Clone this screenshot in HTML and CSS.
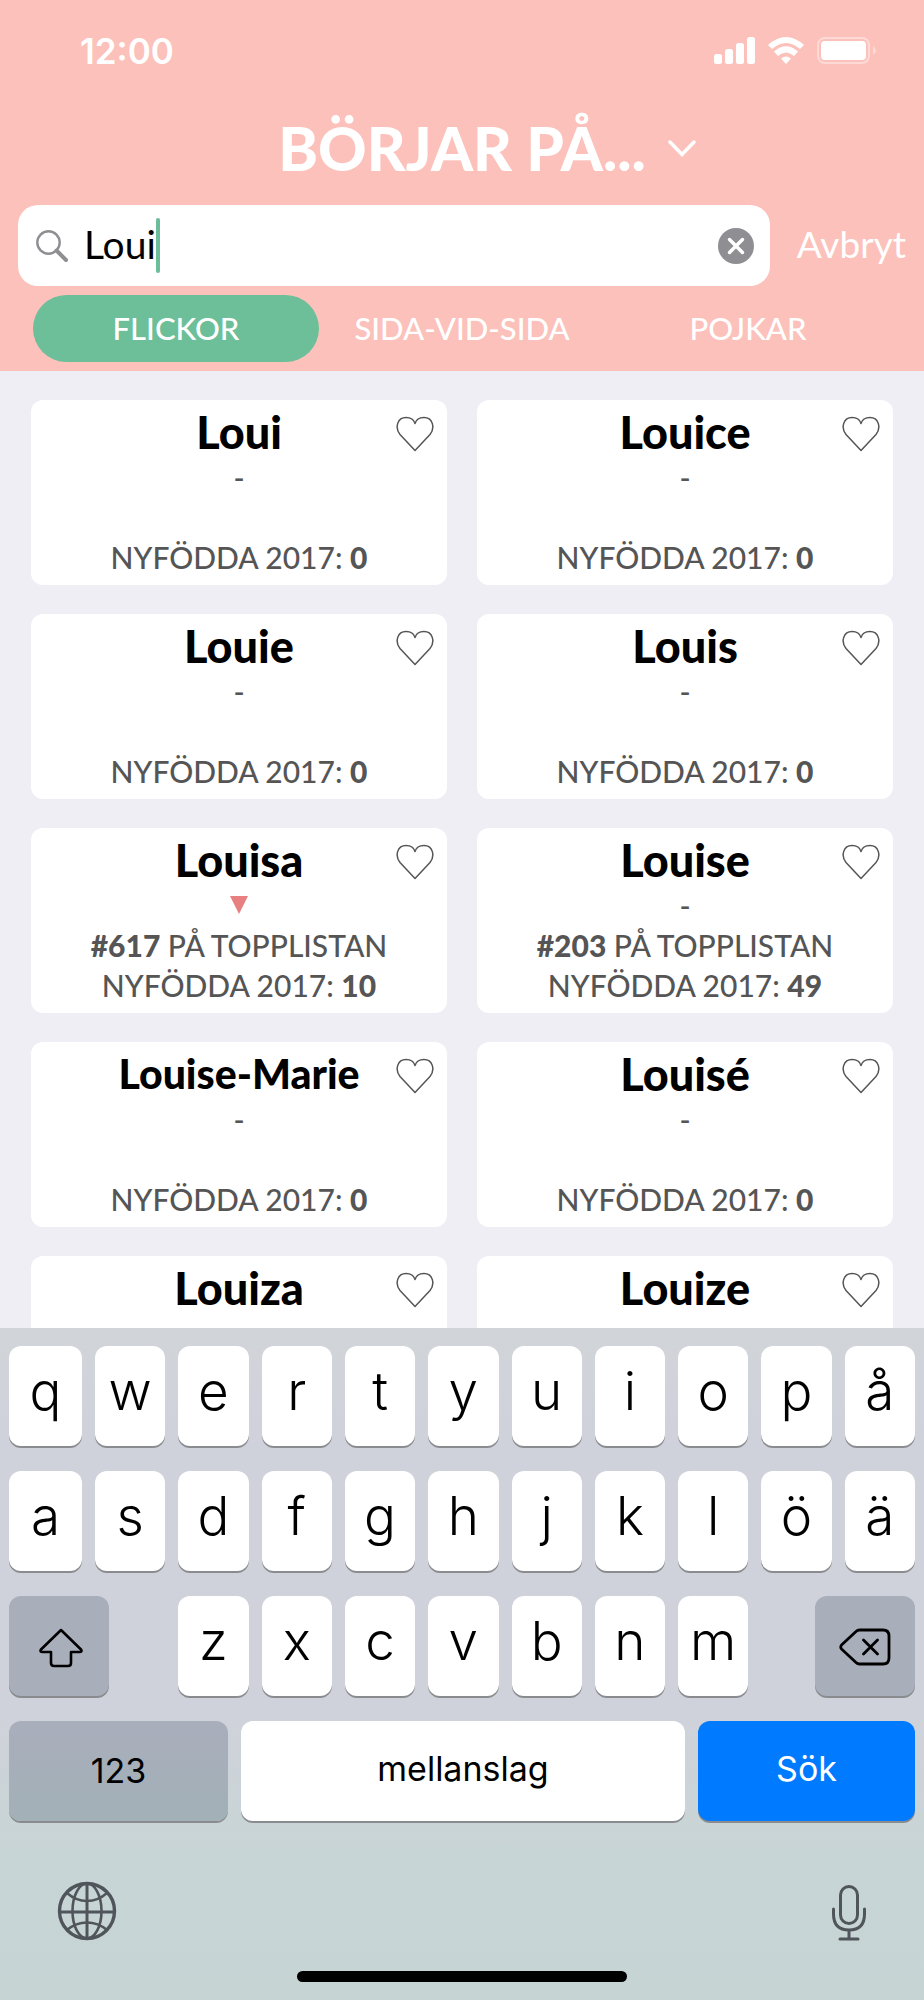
FILE: index.html
```html
<!DOCTYPE html>
<html lang="sv">
<head>
<meta charset="utf-8">
<meta name="viewport" content="width=device-width, initial-scale=1">
<title>Börjar på…</title>
<link rel="stylesheet" href="styles.css">
</head>
<body>
<svg class="defs" aria-hidden="true">
  <symbol id="heart" viewBox="0 0 38 36">
    <path d="M19 34.500 L4 18.500 C-1.500 11.500 1.500 1.500 10 1.500 C14.500 1.500 18 4 19 7.500 C20 4 23.500 1.500 28 1.500 C36.500 1.500 39.500 11.500 34 18.500 Z" fill="none" stroke="#555" stroke-width="1.500" stroke-linejoin="round"/>
  </symbol>
</svg>
<header class="header">
  <div class="status">
    <time class="clock">12:00</time>
    <svg class="status-icons" viewBox="0 0 166 30" aria-hidden="true">
      <g fill="#fff">
        <rect x="1" y="18" width="8" height="10" rx="2.500"/>
        <rect x="12" y="13" width="8" height="15" rx="2.500"/>
        <rect x="23" y="7" width="8" height="21" rx="2.500"/>
        <rect x="34" y="1" width="8" height="27" rx="2.500"/>
        <path d="M55 9 Q73 -7 91 9 L87 13 Q73 1 59 13 Z"/>
        <path d="M61 15.500 Q73 5 85 15.500 L81 20 Q73 13 65 20 Z"/>
        <path d="M68 22.500 Q73 18.500 78 22.500 L73 28 Z"/>
        <rect x="108" y="5" width="45" height="19" rx="4"/>
        <path d="M160 10 Q166 14.500 160 19 Z" opacity=".4"/>
      </g>
      <rect x="105" y="2" width="51" height="25" rx="7" fill="none" stroke="#fff" stroke-width="2" opacity=".4"/>
    </svg>
  </div>
  <button class="title" type="button">
    <span>BÖRJAR PÅ...</span>
    <svg class="chevron" viewBox="0 0 28 17" aria-hidden="true"><path d="M2 2 L14 14.500 L26 2" fill="none" stroke="#fff" stroke-width="3.500" stroke-linecap="round"/></svg>
  </button>
  <form class="search">
    <div class="search-box">
      <svg class="glass" viewBox="0 0 32 32" aria-hidden="true"><g fill="none" stroke="#8e8e93"><circle cx="12.500" cy="12.500" r="11.200" stroke-width="2.400"/><path d="M20.500 20.500 L30 30" stroke-width="4" stroke-linecap="round"/></g></svg>
      <input class="search-input" type="text" value="Loui" aria-label="Sök namn">
      <span class="caret"></span>
      <button class="clear" type="button" aria-label="Rensa"><svg viewBox="0 0 36 36" aria-hidden="true"><circle cx="18" cy="18" r="18" fill="#8e8e93"/><path d="M11.500 11.500 L24.500 24.500 M24.500 11.500 L11.500 24.500" stroke="#fff" stroke-width="3.500" stroke-linecap="round"/></svg></button>
    </div>
    <button class="cancel" type="button">Avbryt</button>
  </form>
  <nav class="tabs">
    <button class="tab active" type="button">FLICKOR</button>
    <button class="tab" type="button">SIDA-VID-SIDA</button>
    <button class="tab" type="button">POJKAR</button>
  </nav>
</header>
<main class="cards">
  <article class="card"><h2>Loui</h2><p class="trend">-</p><p class="rank"></p><p>NYFÖDDA 2017: <b>0</b></p><button class="fav" type="button" aria-label="Spara Loui"><svg><use href="#heart"/></svg></button></article>
  <article class="card"><h2>Louice</h2><p class="trend">-</p><p class="rank"></p><p>NYFÖDDA 2017: <b>0</b></p><button class="fav" type="button" aria-label="Spara Louice"><svg><use href="#heart"/></svg></button></article>
  <article class="card"><h2>Louie</h2><p class="trend">-</p><p class="rank"></p><p>NYFÖDDA 2017: <b>0</b></p><button class="fav" type="button" aria-label="Spara Louie"><svg><use href="#heart"/></svg></button></article>
  <article class="card"><h2>Louis</h2><p class="trend">-</p><p class="rank"></p><p>NYFÖDDA 2017: <b>0</b></p><button class="fav" type="button" aria-label="Spara Louis"><svg><use href="#heart"/></svg></button></article>
  <article class="card"><h2>Louisa</h2><p class="trend"><svg class="down" viewBox="0 0 18 18" aria-hidden="true"><path d="M0 0 H18 L9 18 Z" fill="#e87f80"/></svg></p><p class="rank"><b>#617</b> PÅ TOPPLISTAN</p><p>NYFÖDDA 2017: <b>10</b></p><button class="fav" type="button" aria-label="Spara Louisa"><svg><use href="#heart"/></svg></button></article>
  <article class="card"><h2>Louise</h2><p class="trend">-</p><p class="rank"><b>#203</b> PÅ TOPPLISTAN</p><p>NYFÖDDA 2017: <b>49</b></p><button class="fav" type="button" aria-label="Spara Louise"><svg><use href="#heart"/></svg></button></article>
  <article class="card"><h2 class="long">Louise-Marie</h2><p class="trend">-</p><p class="rank"></p><p>NYFÖDDA 2017: <b>0</b></p><button class="fav" type="button" aria-label="Spara Louise-Marie"><svg><use href="#heart"/></svg></button></article>
  <article class="card"><h2>Louisé</h2><p class="trend">-</p><p class="rank"></p><p>NYFÖDDA 2017: <b>0</b></p><button class="fav" type="button" aria-label="Spara Louisé"><svg><use href="#heart"/></svg></button></article>
  <article class="card"><h2>Louiza</h2><button class="fav" type="button" aria-label="Spara Louiza"><svg><use href="#heart"/></svg></button></article>
  <article class="card"><h2>Louize</h2><button class="fav" type="button" aria-label="Spara Louize"><svg><use href="#heart"/></svg></button></article>
</main>
<section class="keyboard" aria-label="Tangentbord">
  <div class="keys">
    <button class="key">q</button><button class="key">w</button><button class="key">e</button><button class="key">r</button><button class="key">t</button><button class="key">y</button><button class="key">u</button><button class="key">i</button><button class="key">o</button><button class="key">p</button><button class="key">å</button>
    <button class="key">a</button><button class="key">s</button><button class="key">d</button><button class="key">f</button><button class="key">g</button><button class="key">h</button><button class="key">j</button><button class="key">k</button><button class="key">l</button><button class="key">ö</button><button class="key">ä</button>
    <button class="key mod shift" aria-label="Skift"><svg class="shift-icon" viewBox="0 0 44 40" aria-hidden="true"><path d="M22 2 L42 21.500 Q43.500 24 40.500 24 H32 V35 Q32 38 29 38 H15 Q12 38 12 35 V24 H3.500 Q0.500 24 2 21.500 Z" fill="none" stroke="#000" stroke-width="2.600" stroke-linejoin="round"/></svg></button>
    <button class="key">z</button><button class="key">x</button><button class="key">c</button><button class="key">v</button><button class="key">b</button><button class="key">n</button><button class="key">m</button>
    <button class="key mod delete" aria-label="Radera"><svg class="delete-icon" viewBox="0 0 52 38" aria-hidden="true"><path d="M20.500 2 H44 Q50 2 50 8 V30 Q50 36 44 36 H20.500 Q18.500 36 17 34.500 L2.500 21 Q1 19 2.500 17 L17 3.500 Q18.500 2 20.500 2 Z M24.500 12 L38.500 26 M38.500 12 L24.500 26" fill="none" stroke="#000" stroke-width="2.800" stroke-linecap="round" stroke-linejoin="round"/></svg></button>
  </div>
  <div class="bottom-keys">
    <button class="key word mod">123</button>
    <button class="key word space">mellanslag</button>
    <button class="key word go">Sök</button>
  </div>
  <div class="tools">
    <button class="tool" aria-label="Byt språk"><svg class="globe" viewBox="0 0 60 60" aria-hidden="true"><g fill="none" stroke="#50555c" stroke-width="2.600"><circle cx="30" cy="30" r="27.500" stroke-width="3.400"/><ellipse cx="30" cy="30" rx="14.500" ry="27.500"/><path d="M30 2 V58 M2 31 H58" stroke-width="3"/><path d="M10 12 Q19 20 30 20 T50 12 M10 49 Q19 41.500 30 41.500 T50 49" stroke="none"/><path d="M10 12 Q19 20 30 20 Q41 20 50 12 M10 49 Q19 41.500 30 41.500 Q41 41.500 50 49" stroke-width="2.400"/></g></svg></button>
    <button class="tool" aria-label="Diktering"><svg class="mic" viewBox="0 0 34 56" aria-hidden="true"><g fill="none" stroke="#50555c" stroke-width="3"><rect x="8.500" y="1.500" width="17" height="37" rx="8.500"/><path d="M1.500 24 V29 Q1.500 45 17 45 Q32.500 45 32.500 29 V24 M17 45 V54 M8 54 H26" stroke-linecap="round"/></g></svg></button>
  </div>
  <div class="home"></div>
</section>
</body>
</html>
```

FILE: styles.css
```css
* { box-sizing: border-box; }

body {
  margin: 0;
  height: 100vh;
  display: flex;
  flex-direction: column;
  overflow: hidden;
  background: #efeef4;
  color: #000;
  font-family: Lato, "Open Sans", sans-serif;
}

button {
  margin: 0;
  padding: 0;
  border: 0;
  background: none;
  color: inherit;
  font: inherit;
}

svg { display: block; }
.defs { position: absolute; width: 0; height: 0; }

.header {
  flex: none;
  background: #fcc1ba;
  color: #fff;
  padding-bottom: 9px;
}

.status {
  display: flex;
  align-items: center;
  justify-content: space-between;
  height: 102px;
  padding: 0 45px 0 80px;
}

.clock {
  font: 600 35px/40px Inter, sans-serif;
}

.status-icons { width: 166px; height: 30px; }

.title {
  display: flex;
  align-items: center;
  justify-content: center;
  gap: 22px;
  width: 100%;
  height: 92px;
  padding-left: 50px;
  font-size: 60px;
  font-weight: 900;
  line-height: 88px;
}

.chevron { width: 28px; height: 17px; }

.search {
  display: flex;
  align-items: center;
  gap: 27px;
  margin-top: 11px;
  padding: 0 18px;
}

.search-box {
  flex: 1;
  display: flex;
  align-items: center;
  height: 81px;
  padding: 0 16px 0 18px;
  border-radius: 20px;
  background: #fff;
}

.glass { width: 32px; height: 32px; margin-right: 16px; }

.search-input {
  field-sizing: content;
  padding: 0 0 4px;
  border: 0;
  outline: 0;
  background: none;
  color: #000;
  font: 400 39px/48px Lato, sans-serif;
}

.caret {
  width: 4px;
  height: 55px;
  border-radius: 2px;
  background: #6cbd99;
}

.clear { margin-left: auto; }
.clear svg { width: 36px; height: 36px; }

.cancel {
  padding-bottom: 4px;
  font: 400 37px/48px Lato, sans-serif;
}

.tabs {
  display: grid;
  grid-template-columns: repeat(3, 1fr);
  margin-top: 9px;
  padding: 0 33px;
}

.tab {
  height: 67px;
  border-radius: 34px;
  font-size: 31px;
  font-weight: 500;
  line-height: 67px;
}

.active { background: #6cbf99; }

.cards {
  flex: 1;
  min-height: 0;
  overflow: hidden;
  display: grid;
  grid-template-columns: 1fr 1fr;
  grid-auto-rows: max-content;
  gap: 29px 30px;
  padding: 29px 31px 0;
}

.card {
  position: relative;
  min-height: 185px;
  padding: 7px 12px 8px;
  border-radius: 12px;
  background: #fff;
  color: #555;
  font-size: 30px;
  font-weight: 500;
  line-height: 40px;
  text-align: center;
}

.card h2 {
  margin: 0;
  color: #000;
  font-size: 45px;
  font-weight: 900;
  line-height: 50px;
}

.card .long { font-size: 41px; }
.card p { margin: 0; height: 40px; }
.card b { font-weight: 900; }
.trend { display: flex; justify-content: center; }
.down { width: 18px; height: 18px; margin-top: 11px; }

.fav {
  position: absolute;
  top: 16px;
  right: 13px;
}

.fav svg { width: 38px; height: 36px; }

.keyboard {
  flex: none;
  padding: 18px 9px;
  background: linear-gradient(#d1d4d8, #cfd2db 15%, #cfd2da 58%, #c8d5d6 78%, #c6d4d4);
}

.keys {
  display: grid;
  grid-template-columns: 73px repeat(10, 1fr);
  gap: 25px 13px;
}

.key {
  display: flex;
  align-items: center;
  justify-content: center;
  height: 100px;
  padding-bottom: 10px;
  border-radius: 12px;
  background: #fff;
  box-shadow: 0 2px 0 #898b8f;
  color: #000;
  font: 300 53px/64px Inter, sans-serif;
}

.mod {
  padding: 0;
  background: #a9aebb;
}

.shift { grid-column: span 2; width: 100px; padding-left: 3px; }
.delete { grid-column: span 2; width: 100px; justify-self: end; }
.shift-icon { width: 44px; height: 40px; margin-top: 4px; }
.delete-icon { width: 52px; height: 38px; margin-top: 2px; }

.bottom-keys {
  display: grid;
  grid-template-columns: 219fr 444fr 217fr;
  gap: 13px;
  margin-top: 25px;
}

.word {
  padding: 0 0 4px;
  font: 400 34px/44px Inter, sans-serif;
}

.word.mod {
  padding: 0;
  background: linear-gradient(#a9aebb, #a2b0b7);
}

.go { background: #007aff; color: #fff; }

.tools {
  display: flex;
  align-items: center;
  justify-content: space-between;
  height: 60px;
  margin-top: 60px;
  padding: 0 49px 0 48px;
}

.globe { width: 60px; height: 60px; }
.mic { width: 34px; height: 56px; margin-top: 4px; }

.home {
  width: 330px;
  height: 11px;
  margin: 30px auto 0;
  border-radius: 6px;
  background: #000;
}
```
